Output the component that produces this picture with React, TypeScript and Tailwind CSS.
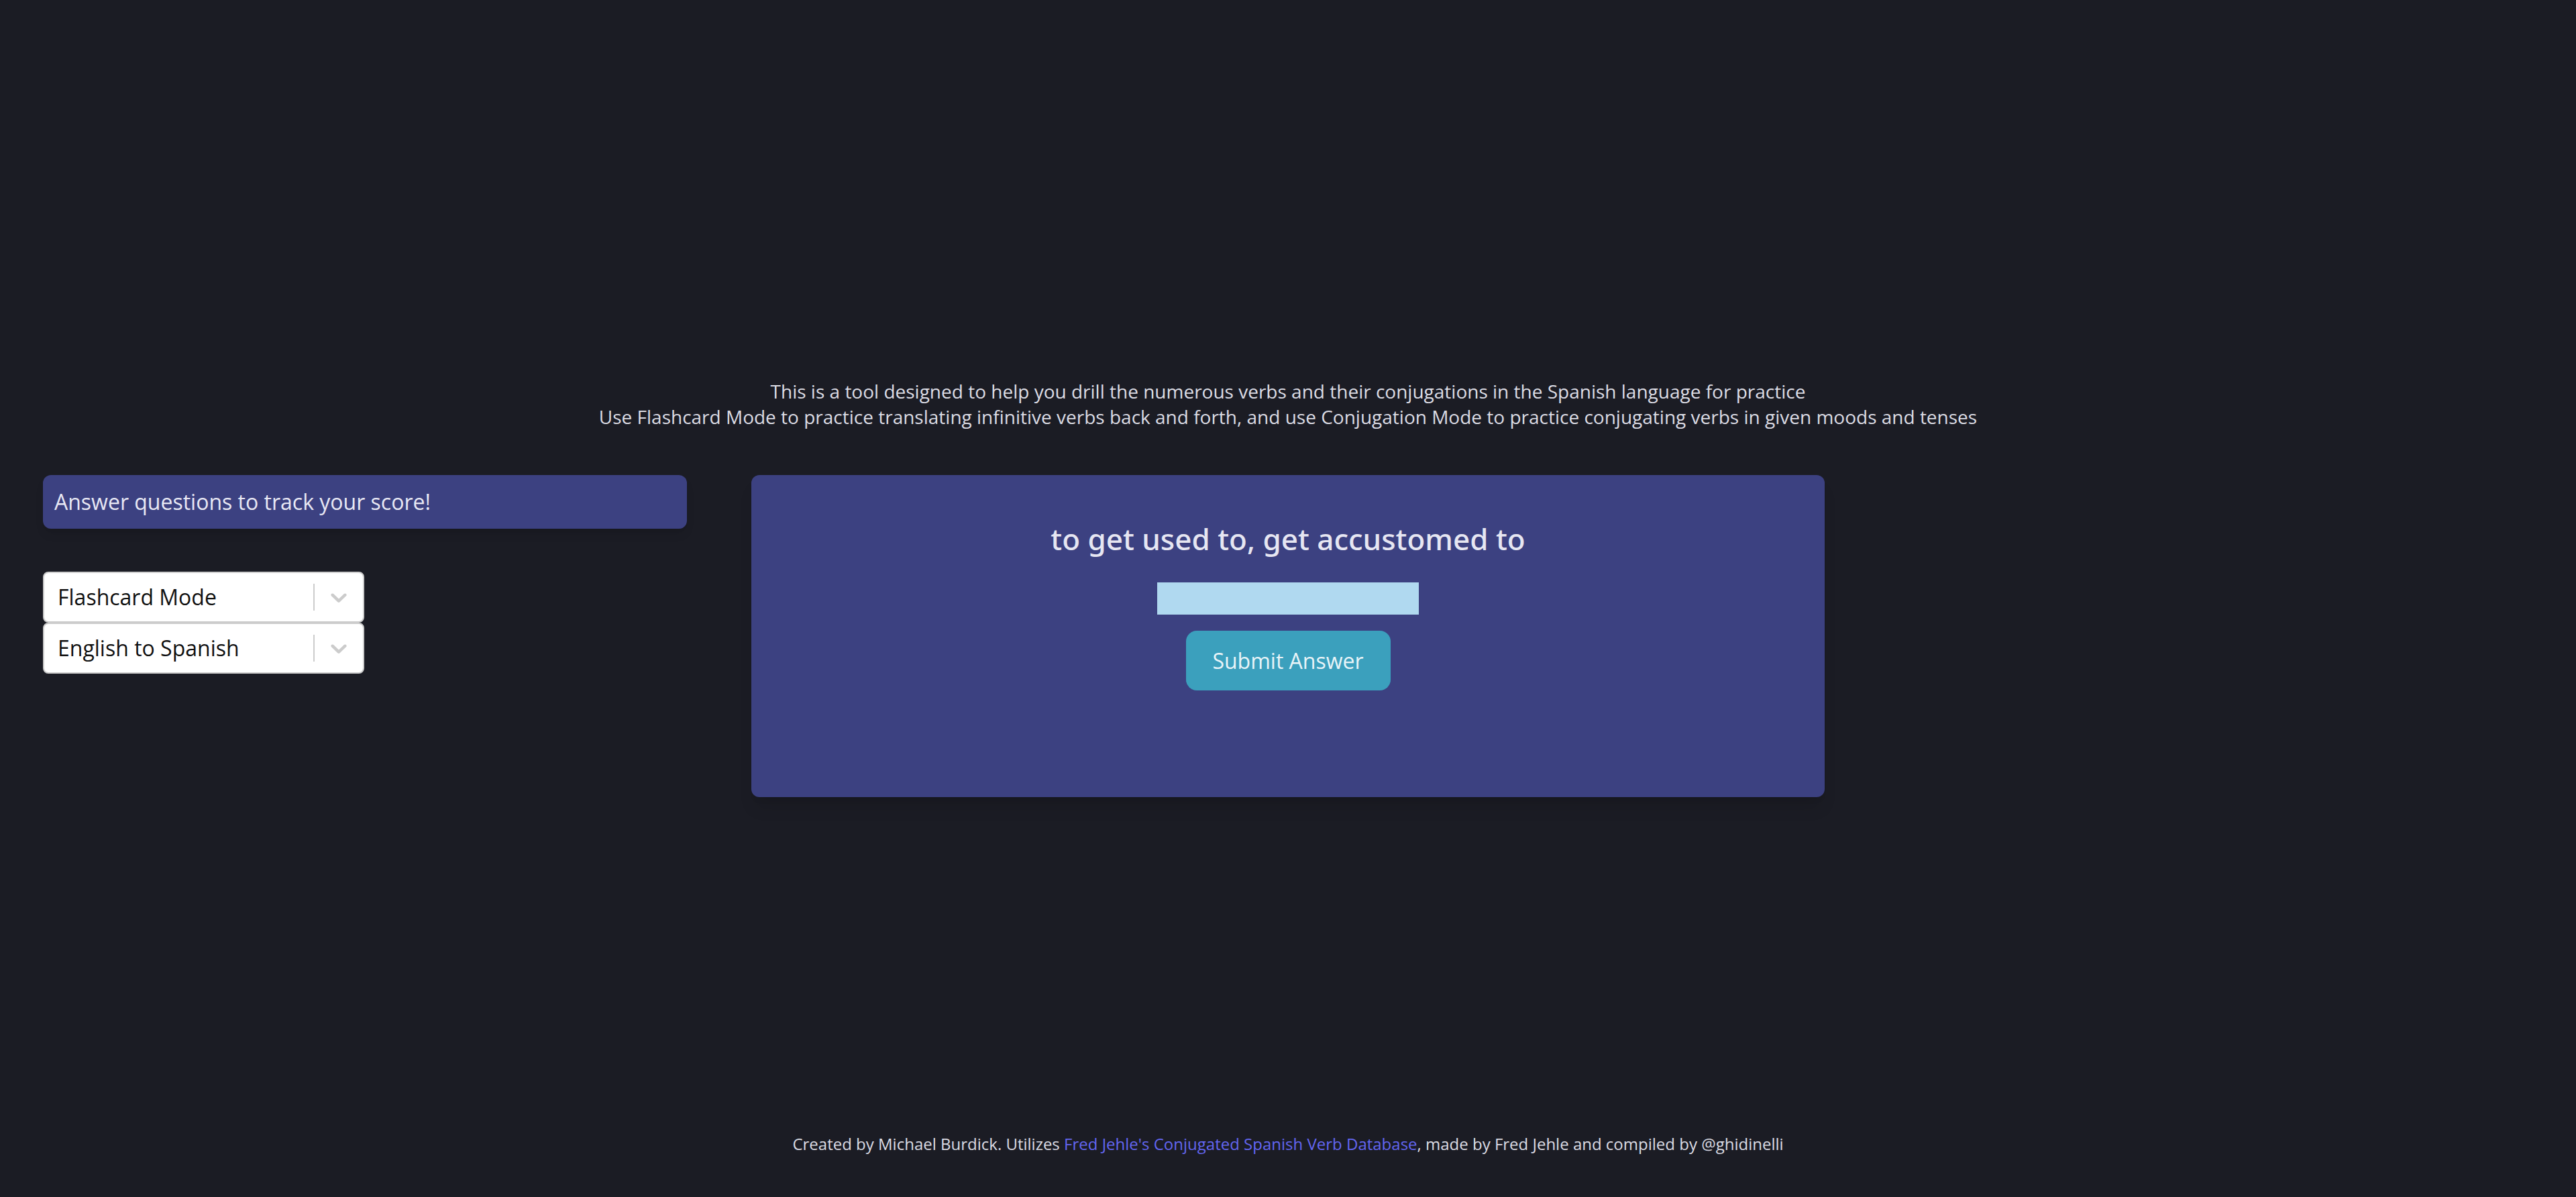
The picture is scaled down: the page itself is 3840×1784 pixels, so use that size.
import { useState } from 'react';

// react-select style dropdown, drawn by hand
function ModeSelect({ value }: { value: string }) {
  return (
    <div className="flex h-[76px] w-[479px] items-center rounded-[8px] border-2 border-[#cccccc] bg-white">
      <div className="flex-1 pl-[20px] text-[32px] text-[#111111]">{value}</div>
      <div className="h-[40px] w-[2px] bg-[#cccccc]" />
      <div className="flex w-[72px] items-center justify-center">
        <svg viewBox="0 0 20 20" className="h-[40px] w-[40px] fill-[#cccccc]">
          <path d="M4.516 7.548c0.436-0.446 1.043-0.481 1.576 0l3.908 3.747 3.908-3.747c0.533-0.481 1.141-0.446 1.574 0 0.436 0.445 0.408 1.197 0 1.615-0.406 0.418-4.695 4.502-4.695 4.502-0.217 0.223-0.502 0.335-0.787 0.335s-0.57-0.112-0.789-0.335c0 0-4.287-4.084-4.695-4.502s-0.436-1.17 0-1.615z" />
        </svg>
      </div>
    </div>
  );
}

export default function App() {
  const [answer, setAnswer] = useState('');

  return (
    <div
      className="flex min-h-screen flex-col bg-[#1b1c24] text-[#e4e4ec]"
      style={{ fontFamily: '"Open Sans", "Noto Sans", sans-serif' }}
    >
      <main className="flex-1 pt-[564px]">
        {/* intro */}
        <div className="text-center text-[28px] leading-[38px] text-[#dcdce4]">
          <p>This is a tool designed to help you drill the numerous verbs and their conjugations in the Spanish language for practice</p>
          <p>Use Flashcard Mode to practice translating infinitive verbs back and forth, and use Conjugation Mode to practice conjugating verbs in given moods and tenses</p>
        </div>

        <div className="mt-[68px] flex px-[64px]">
          {/* score + options */}
          <div className="w-[960px]">
            <div className="flex h-[80px] items-center rounded-[12px] bg-[#3c4181] px-[17px] text-[32px] text-[#e8e8f4] shadow-lg">
              Answer questions to track your score!
            </div>
            <div className="mt-[64px] flex flex-col">
              <ModeSelect value="Flashcard Mode" />
              <ModeSelect value="English to Spanish" />
            </div>
          </div>

          {/* flashcard */}
          <div className="ml-[96px] flex h-[480px] w-[1600px] flex-col items-center rounded-[12px] bg-[#3c4181] pt-[66px] shadow-xl">
            <h2
              className="text-[44px] font-medium leading-[58px] text-[#e6e6f2]"
              style={{ fontFamily: '"Noto Sans", "Open Sans", sans-serif' }}
            >
              to get used to, get accustomed to
            </h2>
            <input
              value={answer}
              onChange={(e) => setAnswer(e.target.value)}
              className="mt-[36px] h-[48px] w-[390px] bg-[#b0d9f0] px-[8px] text-[28px] text-[#111] outline-none"
            />
            <button className="mt-[24px] h-[89px] w-[305px] rounded-[16px] bg-[#3ba0bd] text-[32px] text-[#e8f4f8]">
              Submit Answer
            </button>
          </div>
        </div>
      </main>

      <footer className="pb-[63px] text-center text-[24px] leading-[33px] text-[#dcdce4]">
        Created by Michael Burdick. Utilizes{' '}
        <a href="#" className="text-[#6366f1]">Fred Jehle's Conjugated Spanish Verb Database</a>
        , made by Fred Jehle and compiled by @ghidinelli
      </footer>
    </div>
  );
}
